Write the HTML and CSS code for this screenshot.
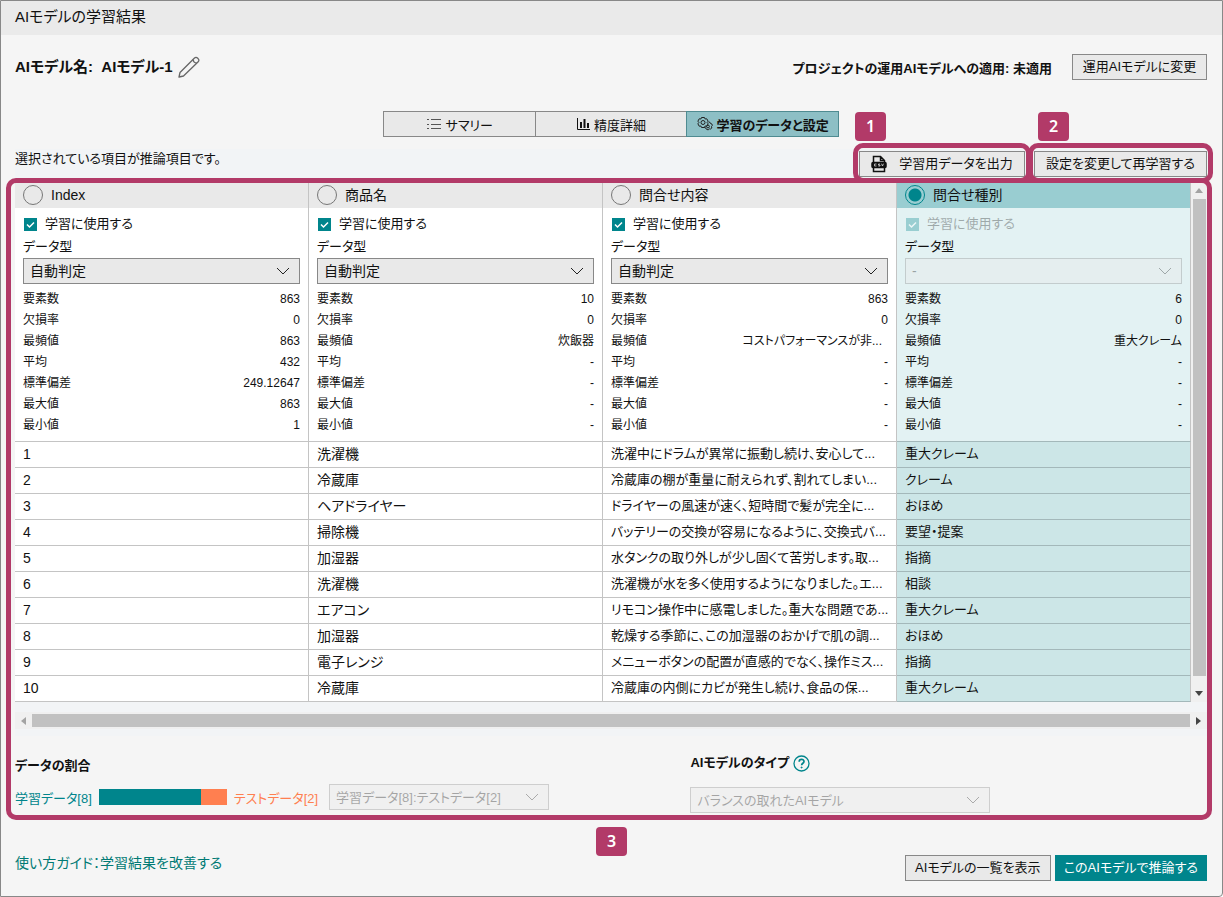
FILE: index.html
```html
<!DOCTYPE html>
<html lang="ja">
<head>
  <meta charset="UTF-8">
  <meta name="viewport" content="width=device-width, initial-scale=1.0">
  <title>AIモデルの学習結果</title>
  <link rel="stylesheet" href="styles.css">
</head>
<body>
  <div class="window">
    <header class="titlebar"><h1>AIモデルの学習結果</h1></header>

    <main class="content">
      <!-- Model name -->
      <div class="model-row">
        <h2 class="model-name">AIモデル名:&nbsp; AIモデル-1</h2>
        <button type="button" class="icon-btn" aria-label="編集">
          <svg width="24" height="24" viewBox="0 0 24 24" fill="none" stroke="#666" stroke-width="1.3" stroke-linejoin="round">
            <path d="M2 22l1-4.500L17.500 3a2 2 0 0 1 3 0l.7.7a2 2 0 0 1 0 3L6.500 21z"/>
            <path d="M16 4.500c.3 2.300 1.500 3.400 3.800 3.700"/>
          </svg>
        </button>
        <p class="model-status">プロジェクトの運用AIモデルへの適用: 未適用</p>
        <button type="button" class="btn btn-apply">運用AIモデルに変更</button>
      </div>

      <!-- Tabs -->
      <nav class="tabs">
        <button type="button" class="tab">
          <svg width="16" height="16" viewBox="0 0 16 16" fill="none" stroke="#555"><path d="M1 3.500h2M1 8.500h2M1 12.500h2M5 3.500h10M5 8.500h10M5 12.500h10"/></svg>
          サマリー
        </button>
        <button type="button" class="tab">
          <svg width="14" height="14" viewBox="0 0 14 14" fill="none" stroke="#111"><path d="M1.500 1v11.500H14"/><path d="M5 11V5M8.500 11V2M12 11V6" stroke-width="2"/></svg>
          精度詳細
        </button>
        <button type="button" class="tab active">
          <svg width="16" height="16" viewBox="0 0 16 16" fill="none" stroke="#222">
            <path d="M4.500 1.500h3l.6 1.500 1.700-.2 1.300 2.400-1 1.300 1 1.300-1.300 2.400-1.700-.2-.6 1.500h-3L3.900 10l-1.700.2L.9 7.800l1-1.300-1-1.300 1.300-2.400 1.700.2z"/>
            <circle cx="6" cy="6.500" r="2"/>
            <path d="M11.500 6l1.500.3.5 1.200 1.500.6.300 1.400-.8 1 .3 1.500-1.100 1-1.300-.2-1 1-1.700-.3-.6-1.200-1.300-.5V11"/>
            <circle cx="11" cy="10.500" r="1.400"/>
          </svg>
          学習のデータと設定
        </button>
      </nav>

      <div class="toolbar">
        <p class="toolbar-text">選択されている項目が推論項目です。</p>
        <div class="callout callout-export">
          <button type="button" class="btn btn-export">
            <svg width="16" height="18" viewBox="0 0 16 18" fill="none" stroke="#111" stroke-width="1.500">
              <path d="M2.500 7V1.500h7l4 4V7M2.500 13v3.500h11V13M9.500 1.500v4h4"/>
              <rect x="1" y="7.500" width="14" height="5" rx="1" fill="#111"/>
              <path d="M5.500 9h-2v2h2M9 9H7.500v1H9v1H7.300M10.500 8.700l1 2.300 1-2.300" stroke="#eee" stroke-width=".7"/>
            </svg>
            学習用データを出力
          </button>
          <span class="frame"></span><span class="badge">1</span>
        </div>
        <div class="callout">
          <button type="button" class="btn btn-retrain">設定を変更して再学習する</button>
          <span class="frame"></span><span class="badge">2</span>
        </div>
      </div>

      <section class="data-section">
        <div class="data-panel">
          <div class="table-area">
            <table class="data-table">
              <thead>
                <tr>
                  <th><label><input type="radio" name="target">Index</label></th>
                  <th><label><input type="radio" name="target">商品名</label></th>
                  <th><label><input type="radio" name="target">問合せ内容</label></th>
                  <th class="selected"><label><input type="radio" name="target" checked>問合せ種別</label></th>
                </tr>
              </thead>
              <tbody>
                <tr class="details">
                  <td>
                    <label class="use"><input type="checkbox" checked>学習に使用する</label>
                    <label class="type" for="type1">データ型</label>
                    <select id="type1"><option>自動判定</option></select>
                    <dl>
                      <dt>要素数</dt><dd>863</dd>
                      <dt>欠損率</dt><dd>0</dd>
                      <dt>最頻値</dt><dd>863</dd>
                      <dt>平均</dt><dd>432</dd>
                      <dt>標準偏差</dt><dd>249.12647</dd>
                      <dt>最大値</dt><dd>863</dd>
                      <dt>最小値</dt><dd>1</dd>
                    </dl>
                  </td>
                  <td>
                    <label class="use"><input type="checkbox" checked>学習に使用する</label>
                    <label class="type" for="type2">データ型</label>
                    <select id="type2"><option>自動判定</option></select>
                    <dl>
                      <dt>要素数</dt><dd>10</dd>
                      <dt>欠損率</dt><dd>0</dd>
                      <dt>最頻値</dt><dd>炊飯器</dd>
                      <dt>平均</dt><dd>-</dd>
                      <dt>標準偏差</dt><dd>-</dd>
                      <dt>最大値</dt><dd>-</dd>
                      <dt>最小値</dt><dd>-</dd>
                    </dl>
                  </td>
                  <td>
                    <label class="use"><input type="checkbox" checked>学習に使用する</label>
                    <label class="type" for="type3">データ型</label>
                    <select id="type3"><option>自動判定</option></select>
                    <dl>
                      <dt>要素数</dt><dd>863</dd>
                      <dt>欠損率</dt><dd>0</dd>
                      <dt>最頻値</dt><dd class="cut">コストパフォーマンスが非...</dd>
                      <dt>平均</dt><dd>-</dd>
                      <dt>標準偏差</dt><dd>-</dd>
                      <dt>最大値</dt><dd>-</dd>
                      <dt>最小値</dt><dd>-</dd>
                    </dl>
                  </td>
                  <td class="selected">
                    <label class="use"><input type="checkbox" checked disabled>学習に使用する</label>
                    <label class="type" for="type4">データ型</label>
                    <select id="type4" disabled><option>-</option></select>
                    <dl>
                      <dt>要素数</dt><dd>6</dd>
                      <dt>欠損率</dt><dd>0</dd>
                      <dt>最頻値</dt><dd>重大クレーム</dd>
                      <dt>平均</dt><dd>-</dd>
                      <dt>標準偏差</dt><dd>-</dd>
                      <dt>最大値</dt><dd>-</dd>
                      <dt>最小値</dt><dd>-</dd>
                    </dl>
                  </td>
                </tr>
                <tr><td>1</td><td>洗濯機</td><td>洗濯中にドラムが異常に振動し続け、安心して...</td><td class="selected">重大クレーム</td></tr>
                <tr><td>2</td><td>冷蔵庫</td><td>冷蔵庫の棚が重量に耐えられず、割れてしまい...</td><td class="selected">クレーム</td></tr>
                <tr><td>3</td><td>ヘアドライヤー</td><td>ドライヤーの風速が速く、短時間で髪が完全に...</td><td class="selected">おほめ</td></tr>
                <tr><td>4</td><td>掃除機</td><td>バッテリーの交換が容易になるように、交換式バ...</td><td class="selected">要望・提案</td></tr>
                <tr><td>5</td><td>加湿器</td><td>水タンクの取り外しが少し固くて苦労します。取...</td><td class="selected">指摘</td></tr>
                <tr><td>6</td><td>洗濯機</td><td>洗濯機が水を多く使用するようになりました。エ...</td><td class="selected">相談</td></tr>
                <tr><td>7</td><td>エアコン</td><td>リモコン操作中に感電しました。重大な問題であ...</td><td class="selected">重大クレーム</td></tr>
                <tr><td>8</td><td>加湿器</td><td>乾燥する季節に、この加湿器のおかげで肌の調...</td><td class="selected">おほめ</td></tr>
                <tr><td>9</td><td>電子レンジ</td><td>メニューボタンの配置が直感的でなく、操作ミス...</td><td class="selected">指摘</td></tr>
                <tr><td>10</td><td>冷蔵庫</td><td>冷蔵庫の内側にカビが発生し続け、食品の保...</td><td class="selected">重大クレーム</td></tr>
              </tbody>
            </table>
            <div class="scroll-v">
              <svg width="8" height="5" viewBox="0 0 8 5"><path d="M0 5l4-5 4 5z" fill="#a3a3a3"/></svg>
              <div class="thumb"></div>
              <svg width="8" height="5" viewBox="0 0 8 5"><path d="M0 0l4 5 4-5z" fill="#444"/></svg>
            </div>
          </div>
          <div class="scroll-h">
            <svg width="5" height="8" viewBox="0 0 5 8"><path d="M5 0L0 4l5 4z" fill="#a3a3a3"/></svg>
            <div class="thumb"></div>
            <svg width="5" height="8" viewBox="0 0 5 8"><path d="M0 0l5 4-5 4z" fill="#444"/></svg>
          </div>
        </div>

        <!-- Split ratio and model type -->
        <div class="settings">
          <div class="ratio">
            <label class="setting-title" for="ratio">データの割合</label>
            <div class="ratio-row">
              <span class="train">学習データ[8]</span>
              <div class="bar"><div class="bar-train" style="width: 80%"></div></div>
              <span class="test">テストデータ[2]</span>
              <select id="ratio" disabled><option>学習データ[8]:テストデータ[2]</option></select>
            </div>
          </div>
          <div class="model-type">
            <div class="type-head">
              <label class="setting-title" for="modelType">AIモデルのタイプ</label>
              <button type="button" class="icon-btn" aria-label="ヘルプ">
                <svg width="17" height="17" viewBox="0 0 17 17" fill="none" stroke="#00858c" stroke-width="1.300">
                  <circle cx="8.500" cy="8.500" r="7.500"/>
                  <path d="M6.200 6.700c0-3 4.800-3 4.800-.2 0 1.700-2.400 1.800-2.400 3.700" stroke-width="1.700"/>
                  <circle cx="8.600" cy="12.500" r=".6" fill="#00858c" stroke-width=".8"/>
                </svg>
              </button>
            </div>
            <select id="modelType" disabled><option>バランスの取れたAIモデル</option></select>
          </div>
        </div>
        <span class="frame"></span><span class="badge">3</span>
      </section>

      <footer class="footer">
        <a href="#">使い方ガイド：学習結果を改善する</a>
        <button type="button" class="btn btn-list">AIモデルの一覧を表示</button>
        <button type="button" class="btn btn-primary">このAIモデルで推論する</button>
      </footer>
    </main>
  </div>
</body>
</html>
```

FILE: styles.css
```css
* {
  box-sizing: border-box;
}

body {
  margin: 0;
  background-color: #fff;
  color: #111;
  font-family: "Liberation Sans", "Noto Sans CJK JP", sans-serif;
  font-size: 13px;
  font-feature-settings: "palt";
  white-space: nowrap;
}

h1, h2, p, dl, dd {
  margin: 0;
}

button, select, input {
  font: inherit;
  font-feature-settings: inherit;
  color: inherit;
  margin: 0;
}

svg {
  display: block;
  flex: none;
}

.window {
  min-height: 100vh;
  background-color: #f5f5f5;
  border: 1px solid #888;
  border-radius: 0 0 4px 0;
}

.titlebar {
  background-color: #eaeaea;
  height: 34px;
  padding: 0 14px;
}

.titlebar h1 {
  font-size: 15px;
  font-weight: normal;
  line-height: 32px;
}

.content {
  padding: 19px 15px 15px 14px;
}

/* Buttons */
.btn {
  height: 26px;
  padding: 0 8px;
  display: flex;
  align-items: center;
  justify-content: center;
  background-color: #e9e9e9;
  border: 1px solid #888;
  line-height: 20px;
}

.btn-primary {
  background-color: #00858c;
  border-color: #00858c;
  color: #fff;
  min-width: 149px;
}

.btn-apply {
  min-width: 135px;
}

.btn-list {
  min-width: 146px;
}

.btn-export {
  min-width: 166px;
  gap: 12px;
}

.btn-retrain {
  min-width: 173px;
}

.icon-btn {
  border: none;
  background: none;
  padding: 0;
}

.model-row {
  display: flex;
  align-items: center;
}

.model-name {
  font-size: 15px;
  line-height: 24px;
  margin-right: 4px;
}

.model-status {
  margin: 0 20px 0 auto;
  font-weight: bold;
}

/* Tabs */
.tabs {
  display: flex;
  width: 456px;
  margin: 31px auto 12px;
}

.tab {
  flex: 1;
  height: 26px;
  padding: 0;
  display: flex;
  align-items: center;
  justify-content: center;
  gap: 4px;
  background-color: #e9e9e9;
  border: 1px solid #888;
  border-right: none;
}

.tab.active {
  background-color: #8dbfc5;
  border: 1px solid #4f8b91;
  font-weight: bold;
}

.toolbar {
  display: flex;
  align-items: flex-start;
  gap: 9px;
  padding: 2px 0 5px;
  background-color: #f2f4f6;
}

.toolbar-text {
  line-height: 16px;
  margin-right: auto;
}

/* Numbered callouts */
.callout, .data-section {
  position: relative;
}

.frame {
  position: absolute;
  inset: -8px -6px -6px;
  border: 5px solid #b23a68;
  border-radius: 10px;
  pointer-events: none;
}

.badge {
  position: absolute;
  left: 4px;
  top: -39px;
  width: 31px;
  height: 29px;
  border-radius: 4px;
  background-color: #b23a68;
  color: #fff;
  font-family: "Noto Sans", sans-serif;
  font-size: 16px;
  font-weight: 600;
  line-height: 28px;
  text-align: center;
}

.callout-export .badge {
  left: -4px;
}

.data-section > .frame {
  inset: -4px -5px -7px -9px;
}

.data-section > .badge {
  left: calc(50% - 15px);
  top: auto;
  bottom: -43px;
}

/* Data table */
.data-panel {
  background-color: #f2f4f6;
  padding-bottom: 7px;
}

.table-area {
  display: flex;
}

.data-table {
  flex: 1;
  width: 100%;
  min-width: 0;
  table-layout: fixed;
  border-spacing: 0;
  background-color: #fff;
}

.data-table th,
.data-table td {
  height: 26px;
  padding: 0 8px;
  border-right: 1px solid #c4c4c4;
  border-bottom: 1px solid #c4c4c4;
  line-height: 20px;
  text-align: left;
  overflow: hidden;
}

.data-table th {
  background-color: #e9e9e9;
  border-bottom: none;
  font-size: 14px;
  font-weight: normal;
}

.data-table td {
  padding-bottom: 2px;
}

.data-table th label {
  display: flex;
  align-items: center;
  gap: 8px;
}

.data-table th.selected {
  background-color: #99cdd1;
}

.data-table td.selected {
  background-color: #cce6e7;
  border-bottom-color: #a3b8ba;
}

.data-table .details td {
  padding: 4px 8px 5px;
}

.data-table .details .selected {
  background-color: #e3f2f3;
}

input[type="radio"] {
  appearance: none;
  width: 20px;
  height: 20px;
  border: 1px solid #777;
  border-radius: 50%;
}

input[type="radio"]:checked {
  border-color: #00858c;
  background: radial-gradient(circle, #00858c 6px, transparent 7px);
}

input[type="checkbox"] {
  appearance: none;
  width: 13px;
  height: 13px;
  background: #00858c url("data:image/svg+xml,%3Csvg xmlns='http://www.w3.org/2000/svg' viewBox='0 0 13 13' fill='none' stroke='white' stroke-width='1.500'%3E%3Cpath d='M3 6.500l2.500 2.500L10 4.500'/%3E%3C/svg%3E");
}

.use {
  display: flex;
  align-items: center;
  gap: 8px;
  height: 24px;
  padding-left: 1px;
}

.use:has(:disabled) {
  opacity: 0.32;
}

.type {
  display: block;
  line-height: 22px;
}

select {
  appearance: none;
  display: block;
  width: 100%;
  height: 26px;
  padding: 0 30px 0 6px;
  border: 1px solid #888;
  border-radius: 0;
  background: #e9e9e9 url("data:image/svg+xml,%3Csvg xmlns='http://www.w3.org/2000/svg' width='14' height='8' fill='none' stroke='%23222'%3E%3Cpath d='M1 1l6 6 6-6'/%3E%3C/svg%3E") no-repeat right 9px center;
}

select:disabled {
  opacity: 0.35;
  color: #111;
}

.details select {
  font-size: 14px;
}

dl {
  display: grid;
  grid-template-columns: auto 1fr;
  margin-top: 5px;
  font-size: 12px;
  line-height: 21px;
}

dd {
  text-align: right;
}

dd.cut {
  padding-right: 6px;
}

/* Row numbers and short values */
.data-table td:first-child,
.data-table td:nth-child(2) {
  font-size: 14px;
}

.data-table .details td {
  font-size: 13px;
}

/* Scrollbars */
.scroll-v {
  flex: none;
  width: 16px;
  display: flex;
  flex-direction: column;
  align-items: center;
  gap: 6px;
  padding: 6px 0;
  background-color: #f0f0f0;
}

.scroll-v .thumb {
  flex: 1;
  width: 13px;
  margin-bottom: 9px;
  background-color: #c1c1c1;
}

.scroll-h {
  height: 17px;
  display: flex;
  align-items: center;
  gap: 6px;
  margin-top: 10px;
  padding: 0 6px;
  background-color: #f0f0f0;
}

.scroll-h .thumb {
  flex: 1;
  height: 13px;
  background-color: #c1c1c1;
}

/* Settings */
.settings {
  display: grid;
  grid-template-columns: 17fr 13fr;
  padding-top: 17px;
}

.setting-title {
  display: block;
  font-weight: bold;
  line-height: 20px;
}

.ratio {
  padding-top: 3px;
}

.ratio-row {
  display: flex;
  align-items: center;
  gap: 7px;
  margin-top: 8px;
}

.train {
  color: #00858c;
}

.test {
  color: #ff7f50;
}

.bar {
  width: 128px;
  height: 16px;
  background-color: #ff7f50;
}

.bar-train {
  height: 100%;
  background-color: #00858c;
}

#ratio {
  width: 220px;
  margin-left: 4px;
}

.type-head {
  display: flex;
  align-items: center;
  gap: 4px;
  margin-bottom: 14px;
}

#modelType {
  width: 300px;
}

.footer {
  display: flex;
  align-items: flex-start;
  gap: 4px;
  margin-top: 42px;
}

.footer a {
  margin-right: auto;
  color: #007a74;
  font-size: 14px;
  line-height: 16px;
  text-decoration: none;
}
```
